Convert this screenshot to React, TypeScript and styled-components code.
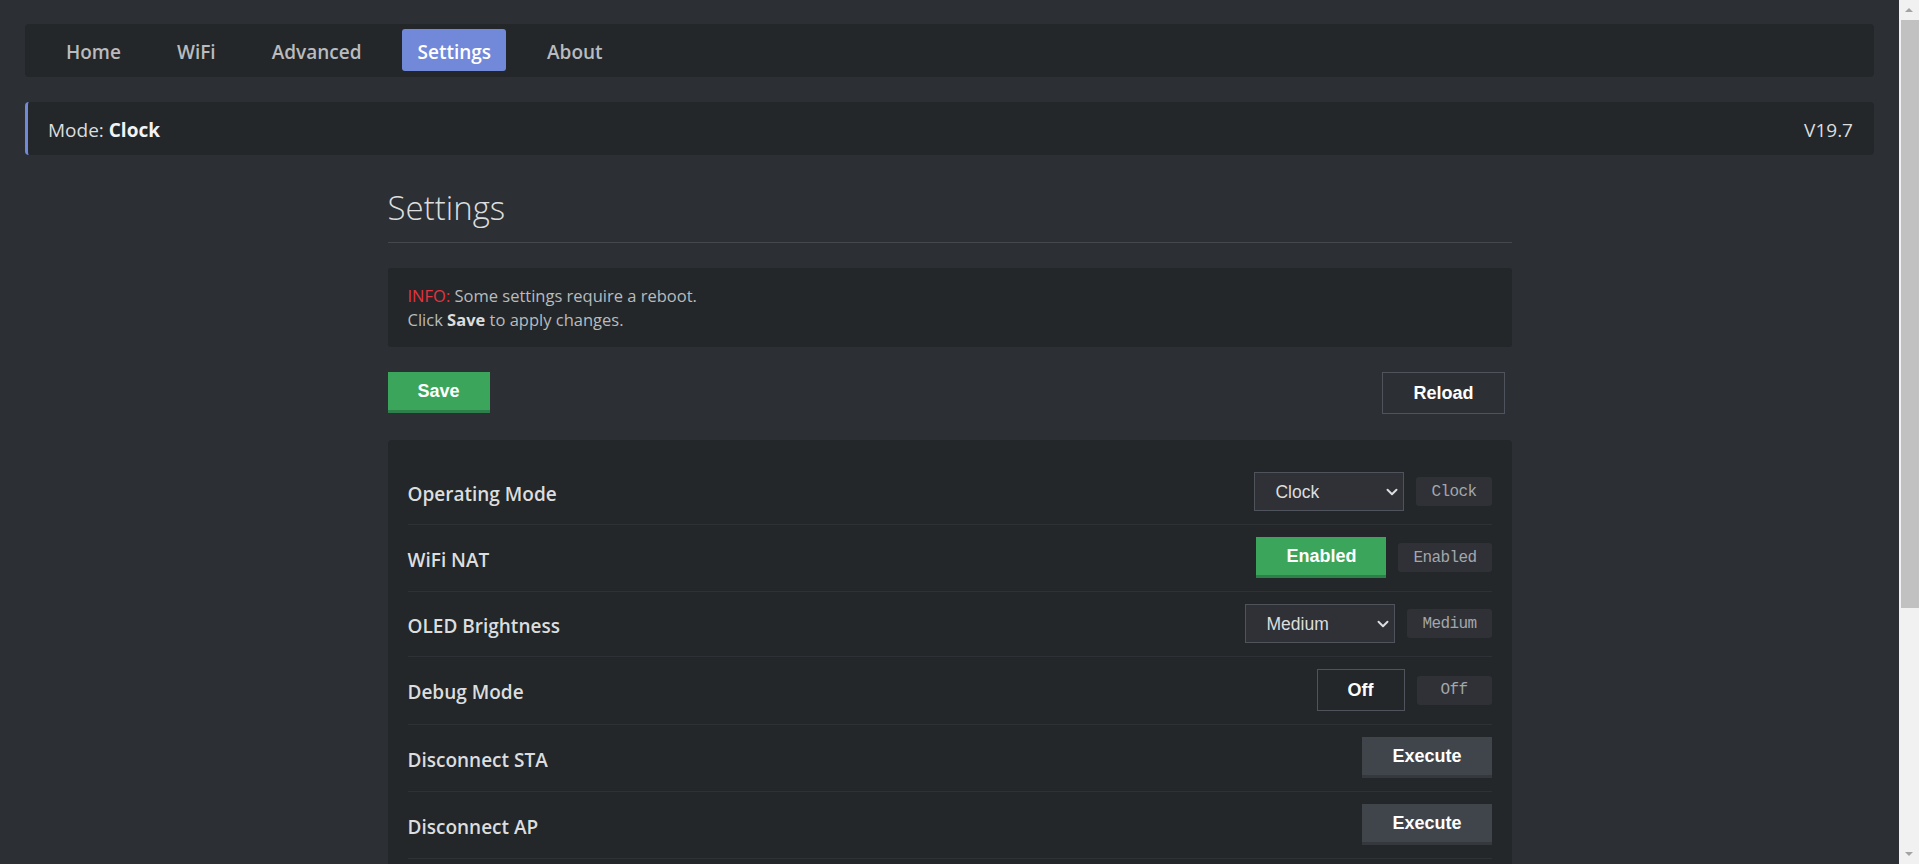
import { FunctionComponent, ReactNode } from 'react';
import styled, { createGlobalStyle, css } from 'styled-components';
import { ChevronDown } from 'lucide-react';

const GlobalStyle = createGlobalStyle`
  html, body {
    margin: 0;
    background: #2c2f33;
  }
  body {
    font-family: "Open Sans", "Noto Sans", sans-serif;
    color: #dcddde;
    overflow: hidden;
  }
  * {
    box-sizing: border-box;
  }
`;

type Setting =
  | { kind: 'select'; label: string; value: string; options: string[] }
  | { kind: 'toggle'; label: string; on: boolean }
  | { kind: 'action'; label: string };

const settings: Setting[] = [
  { kind: 'select', label: 'Operating Mode', value: 'Clock', options: ['Clock', 'Monitor', 'Display'] },
  { kind: 'toggle', label: 'WiFi NAT', on: true },
  { kind: 'select', label: 'OLED Brightness', value: 'Medium', options: ['Low', 'Medium', 'High'] },
  { kind: 'toggle', label: 'Debug Mode', on: false },
  { kind: 'action', label: 'Disconnect STA' },
  { kind: 'action', label: 'Disconnect AP' },
];

const tabs = ['Home', 'WiFi', 'Advanced', 'Settings', 'About'];

const SettingRow: FunctionComponent<{ setting: Setting }> = ({ setting }) => {
  let control: ReactNode;
  if (setting.kind === 'select') {
    control = (
      <>
        <SelectWrap>
          <Select defaultValue={setting.value}>
            {setting.options.map((o) => (
              <option key={o}>{o}</option>
            ))}
          </Select>
          <Chevron size={18} strokeWidth={2.6} />
        </SelectWrap>
        <Badge>{setting.value}</Badge>
      </>
    );
  } else if (setting.kind === 'toggle') {
    const text = setting.on ? 'Enabled' : 'Off';
    control = (
      <>
        <Button $variant={setting.on ? 'success' : 'outline'}>{text}</Button>
        <Badge>{text}</Badge>
      </>
    );
  } else {
    control = <Button $variant="dark">Execute</Button>;
  }

  return (
    <Row>
      <Label>{setting.label}</Label>
      <Controls>{control}</Controls>
    </Row>
  );
};

// classic window scrollbar sitting on the right edge
const Scrollbar: FunctionComponent = () => (
  <ScrollTrack>
    <ScrollArrow viewBox="0 0 20 20">
      <path d="M6 12 L10 8 L14 12 Z" fill="#a3a3a3" />
    </ScrollArrow>
    <ScrollThumb />
    <ScrollArrow viewBox="0 0 20 20" $bottom>
      <path d="M6 8 L10 12 L14 8 Z" fill="#a3a3a3" />
    </ScrollArrow>
  </ScrollTrack>
);

const App: FunctionComponent = () => {
  return (
    <Page>
      <GlobalStyle />
      <NavBar>
        {tabs.map((t) => (
          <NavTab key={t} $active={t === 'Settings'}>
            {t}
          </NavTab>
        ))}
      </NavBar>

      <ModeBar>
        <span>
          Mode: <strong>Clock</strong>
        </span>
        <span>V19.7</span>
      </ModeBar>

      <Content>
        <Title>Settings</Title>
        <InfoBox>
          <InfoTag>INFO:</InfoTag> Some settings require a reboot.
          <br />
          Click <strong>Save</strong> to apply changes.
        </InfoBox>

        <Actions>
          <Button $variant="success">Save</Button>
          <Button $variant="outline" $spaced>
            Reload
          </Button>
        </Actions>

        <Card>
          {settings.map((s) => (
            <SettingRow key={s.label} setting={s} />
          ))}
        </Card>
      </Content>
      <Scrollbar />
    </Page>
  );
};

const Page = styled.div`
  margin-right: 20px;
  padding: 24px 25px 60px;
`;

const NavBar = styled.nav`
  display: flex;
  gap: 26px;
  padding: 5px 26px 6px;
  background: #23272a;
  border-radius: 4px;
`;

const NavTab = styled.a<{ $active?: boolean }>`
  display: flex;
  align-items: center;
  height: 42px;
  padding: 4px 15px 0;
  border-radius: 3px;
  font-size: 19px;
  font-weight: 600;
  color: ${(p) => (p.$active ? '#ffffff' : '#b9bbbe')};
  background: ${(p) => (p.$active ? '#7289da' : 'transparent')};
  cursor: pointer;
`;

const ModeBar = styled.div`
  display: flex;
  align-items: center;
  justify-content: space-between;
  height: 53px;
  margin-top: 25px;
  padding: 3px 21px 0 20px;
  background: #23272a;
  border-left: 3px solid #7289da;
  border-radius: 4px;
  font-size: 19px;
  color: #dcddde;

  strong {
    font-weight: 700;
    color: #f2f3f5;
  }
`;

const Content = styled.main`
  width: 1124px;
  margin: 0 auto;
`;

const Title = styled.h2`
  margin: 31px 0 0;
  padding-bottom: 13px;
  font-size: 33px;
  line-height: 43px;
  font-weight: 300;
  color: #dcddde;
  border-bottom: 1px solid #45484d;
`;

const InfoBox = styled.div`
  margin-top: 25px;
  padding: 16px 20px 15px;
  background: #23272a;
  border-radius: 3px;
  font-size: 16.5px;
  line-height: 24px;
  color: #b9bbbe;

  strong {
    font-weight: 700;
    color: #dcddde;
  }
`;

const InfoTag = styled.span`
  color: #e3343f;
`;

const Actions = styled.div`
  display: flex;
  align-items: flex-start;
  justify-content: space-between;
  margin-top: 25px;
`;

const variants = {
  success: css`
    height: 41px;
    background: #3ba55c;
    border-bottom: 3px solid #2d8049;
  `,
  dark: css`
    height: 41px;
    background: #40444b;
    border-bottom: 3px solid #35383d;
  `,
  outline: css`
    height: 42px;
    background: transparent;
    border: 1px solid #4f545c;
  `,
};

const Button = styled.button<{ $variant: keyof typeof variants; $spaced?: boolean }>`
  display: inline-flex;
  align-items: center;
  justify-content: center;
  padding: 0 30px;
  margin-right: ${(p) => (p.$spaced ? '7px' : '0')};
  border: none;
  border-radius: 0;
  font-family: "Liberation Sans", Arial, sans-serif;
  font-size: 18px;
  font-weight: 700;
  color: #ffffff;
  cursor: pointer;
  ${(p) => variants[p.$variant]}
`;

const Card = styled.section`
  margin-top: 26px;
  padding: 20px;
  background: #23272a;
  border-radius: 4px;
`;

const Row = styled.div`
  display: flex;
  align-items: center;
  justify-content: space-between;
  padding: 12px 0 13px;
  border-bottom: 1px solid #2e3135;
`;

const Label = styled.div`
  padding-top: 4px;
  font-size: 19px;
  font-weight: 600;
  color: #dcddde;
`;

const Controls = styled.div`
  display: flex;
  align-items: center;
  gap: 12px;
`;

const SelectWrap = styled.div`
  position: relative;
  display: flex;
`;

const Select = styled.select`
  appearance: none;
  width: 150px;
  height: 39px;
  padding: 0 30px 0 20px;
  background: #2f3136;
  border: 1px solid #4f545c;
  border-radius: 0;
  font-family: "Liberation Sans", Arial, sans-serif;
  font-size: 17.5px;
  color: #dcddde;
  outline: none;
`;

const Chevron = styled(ChevronDown)`
  position: absolute;
  right: 3px;
  top: 50%;
  transform: translateY(-50%);
  color: #dcddde;
  pointer-events: none;
`;

const Badge = styled.span`
  display: inline-flex;
  align-items: center;
  justify-content: center;
  min-width: 75px;
  height: 29px;
  padding: 0 15px;
  background: #2f3136;
  border-radius: 3px;
  font-family: "Liberation Mono", "Courier New", monospace;
  font-size: 16px;
  letter-spacing: -0.6px;
  color: #a3a7ad;
`;

const ScrollTrack = styled.div`
  position: fixed;
  top: 0;
  right: 0;
  bottom: 0;
  width: 20px;
  display: flex;
  flex-direction: column;
  background: #f1f1f1;
`;

const ScrollArrow = styled.svg<{ $bottom?: boolean }>`
  flex: none;
  width: 20px;
  height: 20px;
  margin-top: ${(p) => (p.$bottom ? 'auto' : '0')};
`;

const ScrollThumb = styled.div`
  height: 588px;
  margin-left: 2px;
  background: #c1c1c1;
`;

export default App;
